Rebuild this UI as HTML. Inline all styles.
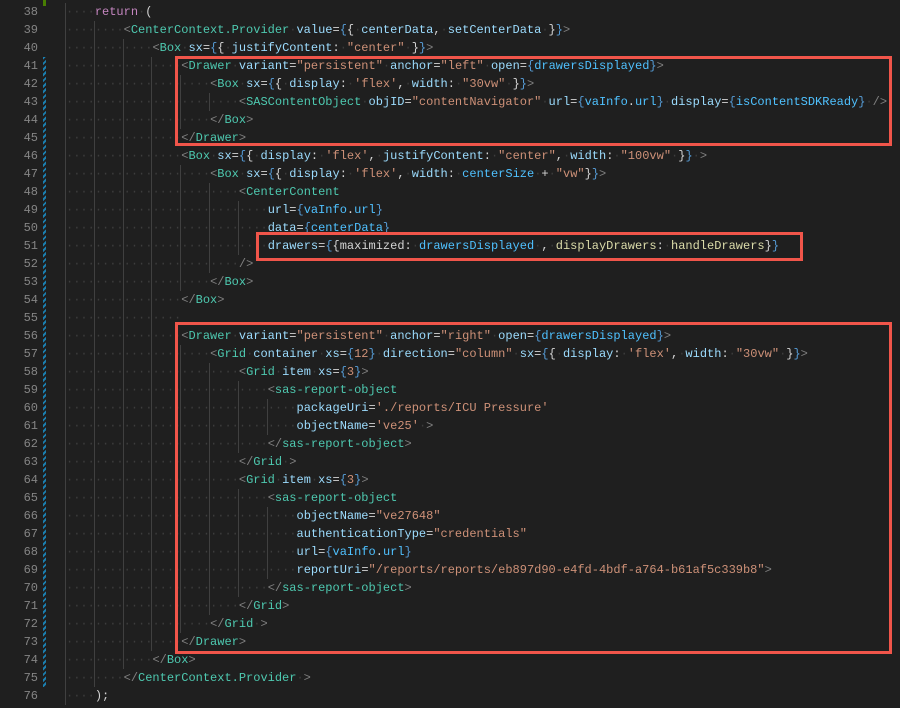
<!DOCTYPE html>
<html><head><meta charset="utf-8"><style>
html,body{margin:0;padding:0;background:#1f1f1f;width:900px;height:708px;overflow:hidden}
#ed{position:relative;width:900px;height:708px;font-family:"Liberation Mono",monospace;font-size:12px}
.ln{position:absolute;left:0;height:18px;line-height:18px;width:900px;white-space:pre}
.num{position:absolute;left:0;width:38px;text-align:right;color:#858585}
.code{position:absolute;left:66px;color:#d4d4d4}
.g{display:inline-block;border-left:1px solid #404040;margin-left:-1px}
.d{color:#3d3d3d}
.t{color:#4ec9b0}.p{color:#808080}.a{color:#9cdcfe}.s{color:#ce9178}.b{color:#569cd6}.v{color:#4fc1ff}.k{color:#c586c0}.f{color:#dcdcaa}.w{color:#d4d4d4}
.box{position:absolute;border:3px solid #f0554a;box-sizing:border-box}
.mk{position:absolute;left:43px;width:3px;background:repeating-linear-gradient(135deg,#1b7fb0 0 2px,transparent 2px 4px)}
</style></head><body><div id="ed"></div>
<script>
const L=[
[4,'<span class="k">return</span> <span class="w">(</span>'],
[8,'<span class="p">&lt;</span><span class="t">CenterContext.Provider</span> <span class="a">value</span><span class="w">=</span><span class="b">{</span><span class="w">{</span> <span class="a">centerData</span><span class="w">,</span> <span class="a">setCenterData</span> <span class="w">}</span><span class="b">}</span><span class="p">&gt;</span>'],
[12,'<span class="p">&lt;</span><span class="t">Box</span> <span class="a">sx</span><span class="w">=</span><span class="b">{</span><span class="w">{</span> <span class="a">justifyContent</span><span class="w">:</span> <span class="s">"center"</span> <span class="w">}</span><span class="b">}</span><span class="p">&gt;</span>'],
[16,'<span class="p">&lt;</span><span class="t">Drawer</span> <span class="a">variant</span><span class="w">=</span><span class="s">"persistent"</span> <span class="a">anchor</span><span class="w">=</span><span class="s">"left"</span> <span class="a">open</span><span class="w">=</span><span class="b">{</span><span class="v">drawersDisplayed</span><span class="b">}</span><span class="p">&gt;</span>'],
[20,'<span class="p">&lt;</span><span class="t">Box</span> <span class="a">sx</span><span class="w">=</span><span class="b">{</span><span class="w">{</span> <span class="a">display</span><span class="w">:</span> <span class="s">\'flex\'</span><span class="w">,</span> <span class="a">width</span><span class="w">:</span> <span class="s">"30vw"</span> <span class="w">}</span><span class="b">}</span><span class="p">&gt;</span>'],
[24,'<span class="p">&lt;</span><span class="t">SASContentObject</span> <span class="a">objID</span><span class="w">=</span><span class="s">"contentNavigator"</span> <span class="a">url</span><span class="w">=</span><span class="b">{</span><span class="v">vaInfo</span><span class="w">.</span><span class="v">url</span><span class="b">}</span> <span class="a">display</span><span class="w">=</span><span class="b">{</span><span class="v">isContentSDKReady</span><span class="b">}</span> <span class="p">/&gt;</span>'],
[20,'<span class="p">&lt;/</span><span class="t">Box</span><span class="p">&gt;</span>'],
[16,'<span class="p">&lt;/</span><span class="t">Drawer</span><span class="p">&gt;</span>'],
[16,'<span class="p">&lt;</span><span class="t">Box</span> <span class="a">sx</span><span class="w">=</span><span class="b">{</span><span class="w">{</span> <span class="a">display</span><span class="w">:</span> <span class="s">\'flex\'</span><span class="w">,</span> <span class="a">justifyContent</span><span class="w">:</span> <span class="s">"center"</span><span class="w">,</span> <span class="a">width</span><span class="w">:</span> <span class="s">"100vw"</span> <span class="w">}</span><span class="b">}</span> <span class="p">&gt;</span>'],
[20,'<span class="p">&lt;</span><span class="t">Box</span> <span class="a">sx</span><span class="w">=</span><span class="b">{</span><span class="w">{</span> <span class="a">display</span><span class="w">:</span> <span class="s">\'flex\'</span><span class="w">,</span> <span class="a">width</span><span class="w">:</span> <span class="v">centerSize</span> <span class="w">+</span> <span class="s">"vw"</span><span class="w">}</span><span class="b">}</span><span class="p">&gt;</span>'],
[24,'<span class="p">&lt;</span><span class="t">CenterContent</span>'],
[28,'<span class="a">url</span><span class="w">=</span><span class="b">{</span><span class="v">vaInfo</span><span class="w">.</span><span class="v">url</span><span class="b">}</span>'],
[28,'<span class="a">data</span><span class="w">=</span><span class="b">{</span><span class="v">centerData</span><span class="b">}</span>'],
[28,'<span class="a">drawers</span><span class="w">=</span><span class="b">{</span><span class="w">{maximized:</span> <span class="v">drawersDisplayed</span> <span class="w">,</span> <span class="f">displayDrawers</span><span class="w">:</span> <span class="f">handleDrawers</span><span class="w">}</span><span class="b">}</span>'],
[24,'<span class="p">/&gt;</span>'],
[20,'<span class="p">&lt;/</span><span class="t">Box</span><span class="p">&gt;</span>'],
[16,'<span class="p">&lt;/</span><span class="t">Box</span><span class="p">&gt;</span>'],
[0,''],
[16,'<span class="p">&lt;</span><span class="t">Drawer</span> <span class="a">variant</span><span class="w">=</span><span class="s">"persistent"</span> <span class="a">anchor</span><span class="w">=</span><span class="s">"right"</span> <span class="a">open</span><span class="w">=</span><span class="b">{</span><span class="v">drawersDisplayed</span><span class="b">}</span><span class="p">&gt;</span>'],
[20,'<span class="p">&lt;</span><span class="t">Grid</span> <span class="a">container</span> <span class="a">xs</span><span class="w">=</span><span class="b">{</span><span class="s">12</span><span class="b">}</span> <span class="a">direction</span><span class="w">=</span><span class="s">"column"</span> <span class="a">sx</span><span class="w">=</span><span class="b">{</span><span class="w">{</span> <span class="a">display</span><span class="w">:</span> <span class="s">\'flex\'</span><span class="w">,</span> <span class="a">width</span><span class="w">:</span> <span class="s">"30vw"</span> <span class="w">}</span><span class="b">}</span><span class="p">&gt;</span>'],
[24,'<span class="p">&lt;</span><span class="t">Grid</span> <span class="a">item</span> <span class="a">xs</span><span class="w">=</span><span class="b">{</span><span class="s">3</span><span class="b">}</span><span class="p">&gt;</span>'],
[28,'<span class="p">&lt;</span><span class="t">sas-report-object</span>'],
[32,'<span class="a">packageUri</span><span class="w">=</span><span class="s">\'./reports/ICU Pressure\'</span>'],
[32,'<span class="a">objectName</span><span class="w">=</span><span class="s">\'ve25\'</span> <span class="p">&gt;</span>'],
[28,'<span class="p">&lt;/</span><span class="t">sas-report-object</span><span class="p">&gt;</span>'],
[24,'<span class="p">&lt;/</span><span class="t">Grid</span> <span class="p">&gt;</span>'],
[24,'<span class="p">&lt;</span><span class="t">Grid</span> <span class="a">item</span> <span class="a">xs</span><span class="w">=</span><span class="b">{</span><span class="s">3</span><span class="b">}</span><span class="p">&gt;</span>'],
[28,'<span class="p">&lt;</span><span class="t">sas-report-object</span>'],
[32,'<span class="a">objectName</span><span class="w">=</span><span class="s">"ve27648"</span>'],
[32,'<span class="a">authenticationType</span><span class="w">=</span><span class="s">"credentials"</span>'],
[32,'<span class="a">url</span><span class="w">=</span><span class="b">{</span><span class="v">vaInfo</span><span class="w">.</span><span class="v">url</span><span class="b">}</span>'],
[32,'<span class="a">reportUri</span><span class="w">=</span><span class="s">"/reports/reports/eb897d90-e4fd-4bdf-a764-b61af5c339b8"</span><span class="p">&gt;</span>'],
[28,'<span class="p">&lt;/</span><span class="t">sas-report-object</span><span class="p">&gt;</span>'],
[24,'<span class="p">&lt;/</span><span class="t">Grid</span><span class="p">&gt;</span>'],
[20,'<span class="p">&lt;/</span><span class="t">Grid</span> <span class="p">&gt;</span>'],
[16,'<span class="p">&lt;/</span><span class="t">Drawer</span><span class="p">&gt;</span>'],
[12,'<span class="p">&lt;/</span><span class="t">Box</span><span class="p">&gt;</span>'],
[8,'<span class="p">&lt;/</span><span class="t">CenterContext.Provider</span> <span class="p">&gt;</span>'],
[4,'<span class="w">);</span>']
];
const ed=document.getElementById('ed');
let h='';
L.forEach((l,i)=>{
  const n=38+i, top=3+i*18;
  let ind=l[0]; if(n===55) ind=16;
  let g='';
  for(let k=0;k<ind/4;k++) g+='<span class="g"><span class="d">····</span></span>';
  let body=l[1].replace(/<\/span> </g,'</span><span class="d">·</span><');
  h+=`<div class="ln" style="top:${top}px"><span class="num">${n}</span><span class="code">${g}${body}</span></div>`;
});
h+='<div class="mk" style="top:57px;height:630px"></div>';
h+='<div style="position:absolute;left:43px;top:0;width:3px;height:6px;background:#487e02"></div>';
h+='<div class="box" style="left:175px;top:56px;width:717px;height:90px"></div>';
h+='<div class="box" style="left:256px;top:232px;width:547px;height:29px"></div>';
h+='<div class="box" style="left:175px;top:322px;width:717px;height:332px"></div>';
ed.innerHTML=h;
</script></body></html>
